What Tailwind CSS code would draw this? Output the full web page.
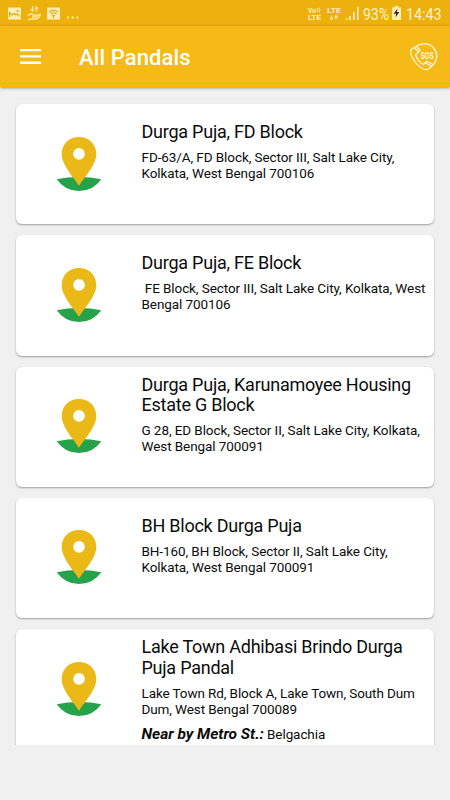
<!DOCTYPE html>
<html lang="en">
<head>
<meta charset="utf-8">
<title>All Pandals</title>
<script src="https://cdn.jsdelivr.net/npm/@tailwindcss/browser@4"></script>
</head>
<body class="w-[450px] h-[800px] overflow-hidden bg-[#f0f0f0] font-[Roboto,sans-serif] text-[#0c0c0c]">
<svg class="hidden">
  <symbol id="pin" viewBox="0 0 46 56">
    <path d="M.7 43.200Q11 41 23 41T45.300 43.200Q37 55 23 55T.7 43.200Z" fill="#25a24a"/>
    <path d="M23 49.800C19 43 5.700 29 5.700 18.500C5.700 7.500 13 1 23 1S40.300 7.500 40.300 18.500C40.300 29 27 43 23 49.800Z" fill="#eab918"/>
    <circle cx="23" cy="17.900" r="5.800" fill="#fff"/>
  </symbol>
</svg>
<div class="h-[26px] bg-[#edb10d] flex items-center pl-2 pr-[2px] text-[#fff1c5]">
  <svg class="w-[13px] h-[13px]" viewBox="0 0 13 13"><rect width="13" height="12" y=".5" rx=".7" fill="#ffedb5"/><path d="M1.500 10V5.500L4 8l2.500-1.500L8 8l1.500-1 2 2.500" fill="none" stroke="#d9a51d" stroke-width="1.100"/><circle cx="9.500" cy="4" r="1" fill="#d9a51d"/></svg>
  <svg class="w-[14px] h-[15px] ml-1.5" viewBox="0 0 14 15" fill="none" stroke="#ffe69c" stroke-width="1.200"><path d="M5.500 0v5M3.500 3.200l2 2 2-2M9.500 6V1M7.800 2.700l1.700-1.700 1.700 1.700"/><path d="M.5 9.500C3 7.500 5 7.500 6 9h3c1 0 1 2-1 2H5M9 10.500l4-2.500c.8 1-1.500 4-3.500 5H4l-3 1" stroke-width="1.400"/></svg>
  <svg class="w-[13px] h-[13px] ml-1.5" viewBox="0 0 13 13"><rect width="13" height="12" y=".5" rx=".7" fill="#ffedb5"/><path d="M2 5Q6.500 1.800 11 5M3.500 7Q6.500 4.500 9.500 7M5 8.600Q6.500 7.500 8 8.600" fill="none" stroke="#d9a51d" stroke-width="1.100"/><circle cx="6.500" cy="10" r=".9" fill="#d9a51d"/></svg>
  <svg class="w-[12px] h-[3px] ml-[7px] mt-[9px]" viewBox="0 0 12 3" fill="#ffedb5"><path d="M0 .5h2v2H0zM4.700 .5h2v2h-2zM9.300 .5h2v2h-2z"/></svg>
  <svg class="ml-auto w-[150px] h-[26px] shrink-0 overflow-visible" viewBox="0 0 150 26" fill="#ffedb8" font-family="Roboto, sans-serif">
    <g font-weight="700" font-size="8">
      <text x="10" y="12.500" font-size="7.500" textLength="8" lengthAdjust="spacingAndGlyphs">Vo</text>
      <path d="M19 8q1.500 2 0 4M21 7.500q2 2.500 0 5" fill="none" stroke="#ffe9ab"/>
      <text x="10" y="20" textLength="13" lengthAdjust="spacingAndGlyphs">LTE</text>
      <text x="29" y="13" textLength="14" lengthAdjust="spacingAndGlyphs">LTE</text>
    </g>
    <path d="M33.500 15.500v4M32 18l1.500 1.500L35 18M38 19.500v-4M36.500 17l1.500-1.500 1.500 1.500" fill="none" stroke="#ffe9ab" stroke-width="1.100"/>
    <path d="M47 20l2.300-2.500V20zM51 16h1.700v4H51zM55 12h1.700v8H55zM59 7h1.600v13H59z"/>
    <text x="65" y="19.700" font-size="16.500" fill="#fff1c5" textLength="26" lengthAdjust="spacingAndGlyphs">93%</text>
    <path d="M94 7.500h2.700V6h3.600v1.500h2.700V20h-9z"/>
    <path d="M99.500 8.500L95.700 13.700h2.500L97.500 17.500 101.300 12H98.800z" fill="#302407"/>
    <text x="108" y="19.700" font-size="16.500" fill="#fff1c5" textLength="35.500" lengthAdjust="spacingAndGlyphs">14:43</text>
  </svg>
</div>
<header class="relative h-[61px] bg-[#f5ba17] shadow-[0_1px_3px_rgba(0,0,0,.4)] flex items-center pl-5 pr-3">
  <svg class="w-[21px] h-[15px]" viewBox="0 0 21 15" fill="#fff"><path d="M0 0h21v2.300H0zM0 6.300h21v2.300H0zM0 12.600h21v2.300H0z"/></svg>
  <h1 class="ml-[38px] mt-[2px] text-[22px] leading-[26px] font-medium text-white tracking-[0.1px]">All Pandals</h1>
  <svg class="ml-auto w-7 h-7" viewBox="0 0 28 28" fill="none" stroke="#fff6d8" stroke-width="1.250" stroke-linejoin="round">
    <path d="M6.500 3.200C12-.5 20 0 24 5.500C28 10.500 27.500 17 23.500 21.500"/>
    <path d="M4.500 4.500L1.200 6.500C.2 9 1.500 14 4.500 18C8 23 13 27 17 26.700C19 26.400 20.500 25 21.500 23.500L15.500 19.500L13.500 21.500C10 20 6.500 15.500 5.500 11.500L8.500 9Z"/>
    <path d="M4.500 4.500L6.500 3.200L10 7.500L8.500 9M15.500 19.500L16.700 18.200L23 21.500L21.500 23.500"/>
    <text x="10.700" y="16" fill="#fff6d8" stroke="none" font-size="9.500" font-weight="700" font-family="Roboto, sans-serif" textLength="13" lengthAdjust="spacingAndGlyphs">SOS</text>
  </svg>
</header>
<main class="h-[658px] overflow-hidden px-4 pt-[17px] flex flex-col gap-[11px]">
  <article class="h-[120.250px] shrink-0 rounded-[6px] bg-white shadow-[0_1px_2px_rgba(0,0,0,.35)] flex">
    <svg class="w-[46px] h-[56px] ml-10 mt-[32px] shrink-0"><use href="#pin"/></svg>
    <div class="ml-[39.500px] pt-[18px] whitespace-nowrap">
      <h2 class="text-[18px] leading-[20.500px] tracking-[-0.240px]">Durga Puja, FD Block</h2>
      <p class="mt-[6.250px] text-[13.500px] leading-4 tracking-[-0.085px]">FD-63/A, FD Block, Sector III, Salt Lake City,<br>Kolkata, West Bengal 700106</p>
    </div>
  </article>
  <article class="h-[120.250px] shrink-0 rounded-[6px] bg-white shadow-[0_1px_2px_rgba(0,0,0,.35)] flex">
    <svg class="w-[46px] h-[56px] ml-10 mt-[32px] shrink-0"><use href="#pin"/></svg>
    <div class="ml-[39.500px] pt-[18px] whitespace-nowrap">
      <h2 class="text-[18px] leading-[20.500px] tracking-[-0.240px]">Durga Puja, FE Block</h2>
      <p class="mt-[6.250px] text-[13.500px] leading-4 tracking-[-0.085px]">&nbsp;FE Block, Sector III, Salt Lake City, Kolkata, West<br>Bengal 700106</p>
    </div>
  </article>
  <article class="h-[120.250px] shrink-0 rounded-[6px] bg-white shadow-[0_1px_2px_rgba(0,0,0,.35)] flex">
    <svg class="w-[46px] h-[56px] ml-10 mt-[31.500px] shrink-0"><use href="#pin"/></svg>
    <div class="ml-[39.500px] pt-[8px] whitespace-nowrap">
      <h2 class="text-[18px] leading-[20.500px] tracking-[-0.240px]">Durga Puja, Karunamoyee Housing<br>Estate G Block</h2>
      <p class="mt-[6px] text-[13.500px] leading-4 tracking-[-0.085px]">G 28, ED Block, Sector II, Salt Lake City, Kolkata,<br>West Bengal 700091</p>
    </div>
  </article>
  <article class="h-[120.250px] shrink-0 rounded-[6px] bg-white shadow-[0_1px_2px_rgba(0,0,0,.35)] flex">
    <svg class="w-[46px] h-[56px] ml-10 mt-[31.500px] shrink-0"><use href="#pin"/></svg>
    <div class="ml-[39.500px] pt-[18px] whitespace-nowrap">
      <h2 class="text-[18px] leading-[20.500px] tracking-[-0.240px]">BH Block Durga Puja</h2>
      <p class="mt-[6.250px] text-[13.500px] leading-4 tracking-[-0.085px]">BH-160, BH Block, Sector II, Salt Lake City,<br>Kolkata, West Bengal 700091</p>
    </div>
  </article>
  <article class="h-[124px] shrink-0 rounded-[6px] bg-white shadow-[0_1px_2px_rgba(0,0,0,.35)] flex">
    <svg class="w-[46px] h-[56px] ml-10 mt-[32px] shrink-0"><use href="#pin"/></svg>
    <div class="ml-[39.500px] pt-[8px] whitespace-nowrap">
      <h2 class="text-[18px] leading-[20.500px] tracking-[-0.240px]">Lake Town Adhibasi Brindo Durga<br>Puja Pandal</h2>
      <p class="mt-[7px] text-[13.500px] leading-4 tracking-[-0.105px]">Lake Town Rd, Block A, Lake Town, South Dum<br>Dum, West Bengal 700089</p>
      <p class="mt-[9px] text-[13.500px] leading-4 tracking-[-0.085px]"><b class="italic text-[15.500px] tracking-[-0.03px]">Near by Metro St.:</b> Belgachia</p>
    </div>
  </article>
</main>
</body>
</html>
